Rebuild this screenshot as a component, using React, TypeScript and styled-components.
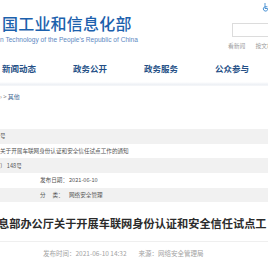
import styled, { createGlobalStyle } from "styled-components";

const GlobalStyle = createGlobalStyle`
  html, body {
    margin: 0;
    padding: 0;
    background: #fff;
  }
  body {
    font-family: "Noto Sans CJK SC", "Noto Sans", sans-serif;
  }
`;

const Page = styled.div`
  width: 268px;
  height: 273px;
  overflow: hidden;
  background: #fff;
`;

const Header = styled.div`
  display: flex;
  justify-content: space-between;
  height: 58px;
`;

const Brand = styled.div`
  display: flex;
  flex-direction: column;
  padding: 14px 0 0 2px;
`;

const SiteTitle = styled.div`
  font-size: 16px;
  line-height: 18px;
  font-weight: 500;
  color: #1c61ad;
  letter-spacing: 0.2px;
  white-space: nowrap;
`;

const SiteSub = styled.div`
  margin-top: 4px;
  margin-left: -2px;
  font-family: "Liberation Sans", Arial, sans-serif;
  font-size: 6.6px;
  line-height: 8px;
  color: #5d88c2;
  white-space: nowrap;
`;

const Tools = styled.div`
  display: flex;
  flex-direction: column;
  align-items: flex-end;
  width: 60px;
  margin-right: -16px;
  padding-top: 3px;
`;

const IconRow = styled.div`
  width: 100%;
  display: flex;
  justify-content: flex-start;
  padding-left: 38px;
  box-sizing: border-box;
  color: #3a88cf;
  height: 10px;
`;

const SearchBox = styled.div`
  margin-top: 10px;
  width: 50px;
  height: 12px;
  border: 1px solid #dcdcdc;
  background: #fff;
`;

const Links = styled.div`
  display: flex;
  gap: 10px;
  width: 100%;
  margin-top: 5px;
  padding-left: 4px;
  box-sizing: border-box;
  font-size: 5.8px;
  line-height: 7px;
  color: #9a9a9a;
  white-space: nowrap;
`;

const Nav = styled.div`
  display: flex;
  height: 20px;
  align-items: center;
  padding-left: 2px;
`;

const NavItem = styled.div`
  width: 71px;
  flex: none;
  font-size: 8.5px;
  line-height: 10px;
  font-weight: 700;
  color: #244f86;
  white-space: nowrap;
`;

const Band = styled.div`
  margin-top: 4px;
  height: 4px;
  background: linear-gradient(#fff, #eef1f5 60%, #f6f7f9);
`;

const Crumb = styled.div`
  padding: 7px 0 0 0;
  height: 12px;
  font-size: 6px;
  line-height: 8px;
  color: #777;
  white-space: nowrap;
`;

const CrumbLink = styled.span`
  color: #4c6f99;
`;

const InfoTable = styled.div`
  margin-top: 24px;
  display: flex;
  flex-direction: column;
`;

const InfoRow = styled.div<{ $shade: boolean; $indent: number }>`
  height: 14.7px;
  display: flex;
  align-items: center;
  padding-left: ${(p) => p.$indent}px;
  background: ${(p) => (p.$shade ? "#f1f1f1" : "#fff")};
  font-size: 5.6px;
  color: #555;
  white-space: nowrap;
`;

const Label = styled.span`
  flex: none;
  width: 29px;
  margin-right: 0;
  color: #555;
`;

const ArticleTitle = styled.div`
  margin-top: 14px;
  font-size: 11.2px;
  line-height: 14px;
  font-weight: 700;
  color: #2b2b2b;
  white-space: nowrap;
  margin-left: -2px;
`;

const Rule = styled.div`
  margin-top: 11px;
  height: 1px;
  background: #efefef;
`;

const Meta = styled.div`
  display: flex;
  padding: 7px 0 0 43px;
  gap: 12px;
  font-size: 6.5px;
  line-height: 8px;
  color: #a3a3a3;
  white-space: nowrap;
`;

function WheelchairIcon() {
  return (
    <svg width="8" height="9" viewBox="0 0 16 18" fill="none" stroke="currentColor" strokeWidth="1.8" strokeLinecap="round">
      <circle cx="6" cy="2" r="1.6" fill="currentColor" stroke="none" />
      <path d="M6 5 L6 11 L11 11 L13 16" />
      <path d="M6 7.5 L10 7.5" />
      <path d="M4 8.5 A4.5 4.5 0 1 0 11 14" />
    </svg>
  );
}

const rows = [
  { text: "号", indent: 0, shade: true },
  { text: "关于开展车联网身份认证和安全信任试点工作的通知", indent: 0, shade: false },
  { text: "〕 148号", indent: 0, shade: true },
];

function App() {
  return (
    <Page>
      <GlobalStyle />
      <Header>
        <Brand>
          <SiteTitle>国工业和信息化部</SiteTitle>
          <SiteSub>n Technology of the People's Republic of China</SiteSub>
        </Brand>
        <Tools>
          <IconRow>
            <WheelchairIcon />
          </IconRow>
          <SearchBox />
          <Links>
            <span>看新闻</span>
            <span>按文档</span>
          </Links>
        </Tools>
      </Header>
      <Nav>
        <NavItem>新闻动态</NavItem>
        <NavItem>政务公开</NavItem>
        <NavItem>政务服务</NavItem>
        <NavItem>公众参与</NavItem>
      </Nav>
      <Band />
      <Crumb>
        › &gt; <CrumbLink>其他</CrumbLink>
      </Crumb>
      <InfoTable>
        {rows.map((r, i) => (
          <InfoRow key={i} $shade={r.shade} $indent={r.indent}>
            {r.text}
          </InfoRow>
        ))}
        <InfoRow $shade={false} $indent={40}>
          <Label>发布日期：</Label>2021-06-10
        </InfoRow>
        <InfoRow $shade={true} $indent={40}>
          <Label>分　 类：</Label>网络安全管理
        </InfoRow>
      </InfoTable>
      <ArticleTitle>息部办公厅关于开展车联网身份认证和安全信任试点工</ArticleTitle>
      <Rule />
      <Meta>
        <span>发布时间：2021-06-10 14:32</span>
        <span>来源：网络安全管理局</span>
      </Meta>
    </Page>
  );
}

export default App;
